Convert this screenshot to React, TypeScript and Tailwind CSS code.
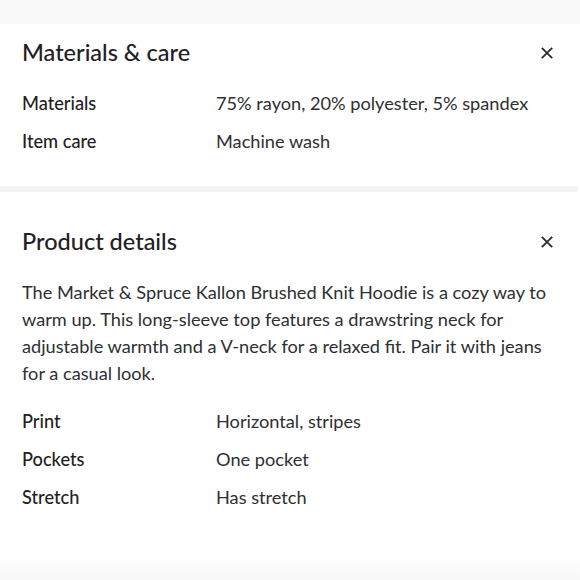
import React from 'react';

const font = { fontFamily: 'Lato, "Noto Sans", sans-serif' };

function CloseIcon() {
  return (
    <svg width="12" height="12" viewBox="0 0 12 12" fill="none" stroke="#2e2f32" strokeWidth="1.9">
      <path d="M0.8 0.8L11.2 11.2M11.2 0.8L0.8 11.2" />
    </svg>
  );
}

function Row({ label, value }: { label: string; value: string }) {
  return (
    <div className="flex h-[38px] items-center">
      <span className="w-[194px] shrink-0 font-medium text-[#1f2023]">{label}</span>
      <span>{value}</span>
    </div>
  );
}

function Header({ title }: { title: string }) {
  return (
    <div className="flex h-[58px] items-center justify-between">
      <h2 className="text-[23.5px] font-medium text-[#1f2023]">{title}</h2>
      <button className="mr-[5px]">
        <CloseIcon />
      </button>
    </div>
  );
}

export default function App() {
  return (
    <div className="h-[580px] w-[580px] overflow-hidden bg-white text-[18.2px] text-[#2e2f32]" style={font}>
      <div className="h-[24px] bg-[#f9f9f9]" />
      <section className="bg-white px-[22px] pb-[25px]">
        <Header title="Materials & care" />
        <div className="pt-[3px]">
          <Row label="Materials" value="75% rayon, 20% polyester, 5% spandex" />
          <Row label="Item care" value="Machine wash" />
        </div>
      </section>
      <div className="mr-[2px] h-[6px] bg-[#f2f3f4]" />
      <section className="bg-white px-[22px] pt-[21px]">
        <Header title="Product details" />
        <p className="pt-[8px] leading-[27px]">
          The Market &amp; Spruce Kallon Brushed Knit Hoodie is a cozy way to warm up. This long-sleeve top features a drawstring neck for adjustable warmth and a V-neck for a relaxed fit. Pair it with jeans for a casual look.
        </p>
        <div className="pt-[16px]">
          <Row label="Print" value="Horizontal, stripes" />
          <Row label="Pockets" value="One pocket" />
          <Row label="Stretch" value="Has stretch" />
        </div>
      </section>
      <div className="mt-[40px] h-[24px] bg-gradient-to-b from-white to-[#f7f7f7]" />
    </div>
  );
}
